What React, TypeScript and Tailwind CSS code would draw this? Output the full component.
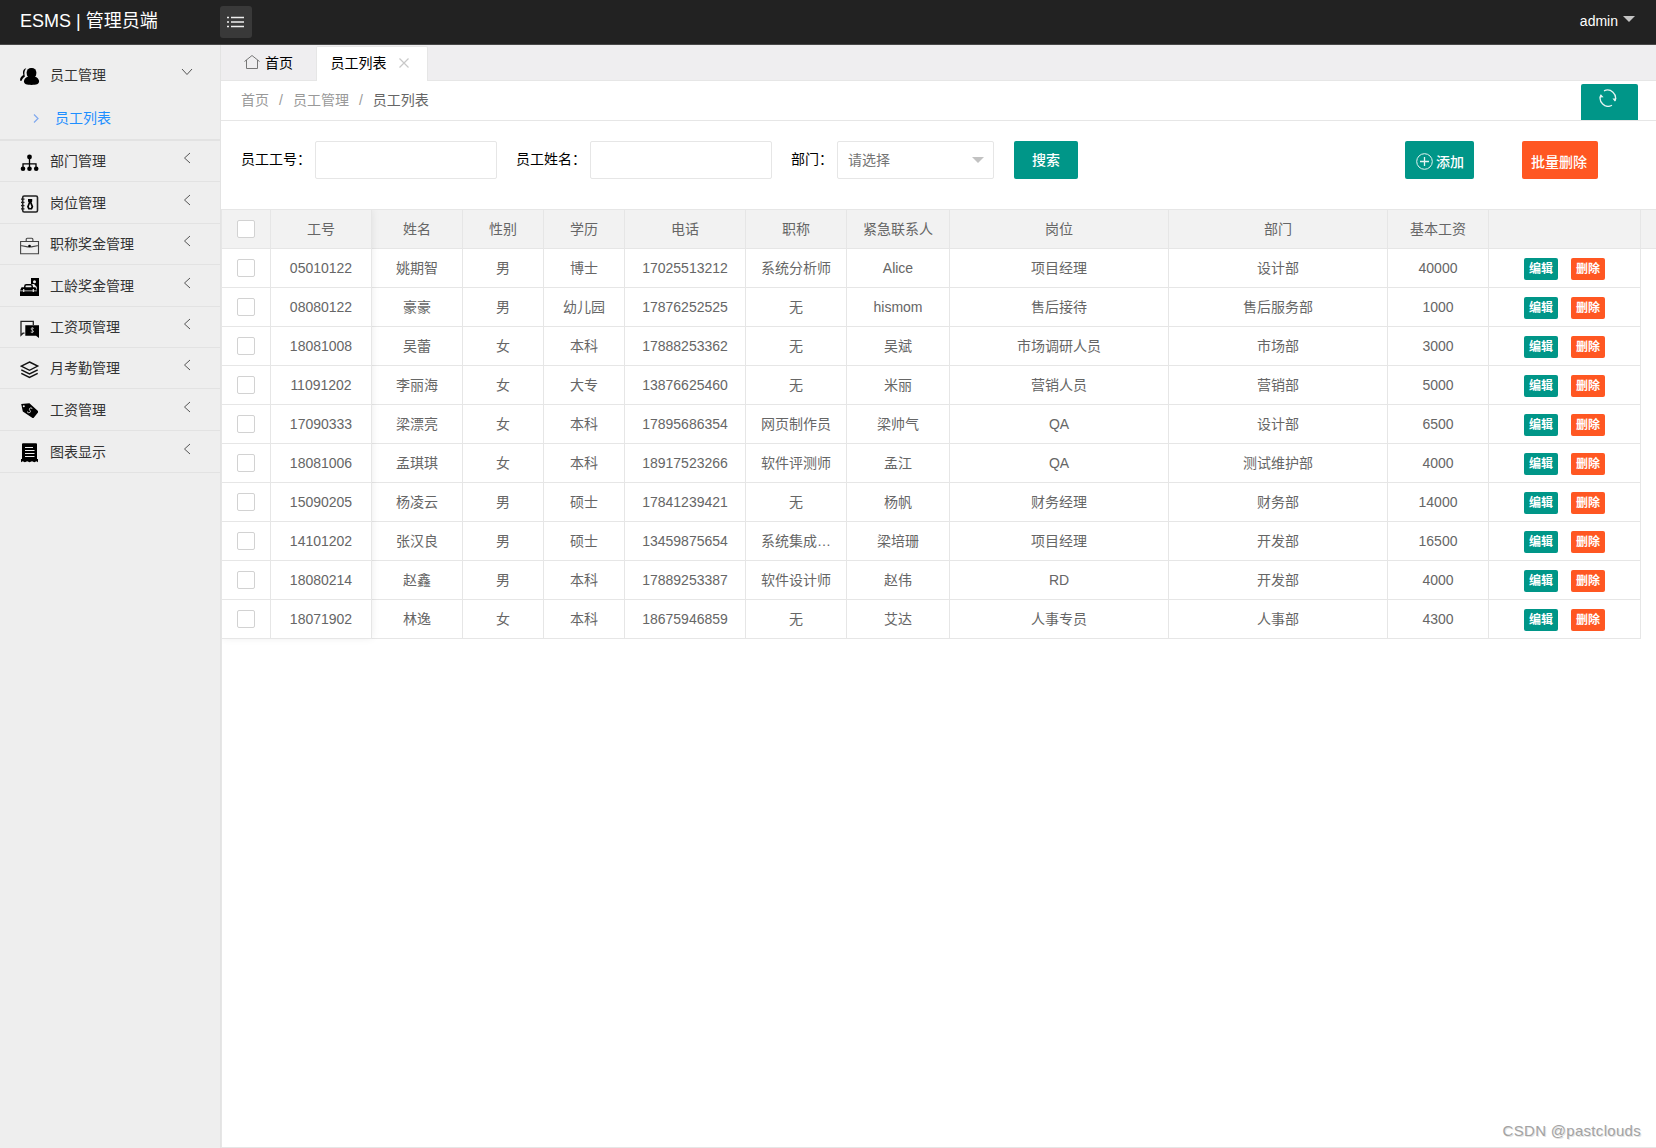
import type { ReactNode } from "react";

const employees = [
    ['05010122', '姚期智', '男', '博士', '17025513212', '系统分析师', 'Alice', '项目经理', '设计部', '40000'],
    ['08080122', '豪豪', '男', '幼儿园', '17876252525', '无', 'hismom', '售后接待', '售后服务部', '1000'],
    ['18081008', '吴蕾', '女', '本科', '17888253362', '无', '吴斌', '市场调研人员', '市场部', '3000'],
    ['11091202', '李丽海', '女', '大专', '13876625460', '无', '米丽', '营销人员', '营销部', '5000'],
    ['17090333', '梁漂亮', '女', '本科', '17895686354', '网页制作员', '梁帅气', 'QA', '设计部', '6500'],
    ['18081006', '孟琪琪', '女', '本科', '18917523266', '软件评测师', '孟江', 'QA', '测试维护部', '4000'],
    ['15090205', '杨凌云', '男', '硕士', '17841239421', '无', '杨帆', '财务经理', '财务部', '14000'],
    ['14101202', '张汉良', '男', '硕士', '13459875654', '系统集成…', '梁培珊', '项目经理', '开发部', '16500'],
    ['18080214', '赵鑫', '男', '本科', '17889253387', '软件设计师', '赵伟', 'RD', '开发部', '4000'],
    ['18071902', '林逸', '女', '本科', '18675946859', '无', '艾达', '人事专员', '人事部', '4300'],
];

const headings = ['工号', '姓名', '性别', '学历', '电话', '职称', '紧急联系人', '岗位', '部门', '基本工资'];

const columns = 'grid grid-cols-[49px_101px_91px_81px_81px_121px_101px_103px_219px_219px_101px_152px]';

const Icon = ({ children }: { children: ReactNode }) => (
    <svg viewBox="0 0 20 20" className="w-5 h-5 shrink-0 fill-black">
        {children}
    </svg>
);

const menu = [
    {
        label: '部门管理',
        height: 'h-[41px]',
        icon: (
            <Icon>
                <circle cx="9.5" cy="4" r="2.4" />
                <path d="M9.5 5v10M3 15v-4.2h13V15" fill="none" stroke="#000" strokeWidth="1.3" />
                <circle cx="3" cy="15.8" r="2.3" />
                <circle cx="9.5" cy="15.8" r="2.3" />
                <circle cx="16.2" cy="15.8" r="2.3" />
            </Icon>
        ),
    },
    {
        label: '岗位管理',
        height: 'h-[42px]',
        icon: (
            <Icon>
                <rect x="2.7" y="2" width="14.8" height="16" rx="1.5" fill="none" stroke="#222" strokeWidth="1.6" />
                <path d="M1 5.2h3.5M1 8.4h3.5M1 11.6h3.5M1 14.8h3.5" stroke="#222" strokeWidth="1.3" />
                <path fillRule="evenodd" d="M8 5h4.2v2.500l-.6.800 1.700 4.500-1.300 2.600H8.300L7 12.800l1.700-4.500-.7-.8zM10.100 9.200l-1.200 3.400.6 1.400h1.300l.6-1.400z" />
            </Icon>
        ),
    },
    {
        label: '职称奖金管理',
        height: 'h-[41px]',
        icon: (
            <Icon>
                <path d="M.6 5.5h17.9v12.3H.6zM.6 9.500l7 1.400h3.900l7-1.400M6.200 5V3.400Q6.200 2.300 7.300 2.300h4.500q1.100 0 1.100 1.100V5" fill="none" stroke="#444" strokeWidth="1.1" />
                <circle cx="9.5" cy="10" r="1.3" />
            </Icon>
        ),
    },
    {
        label: '工龄奖金管理',
        height: 'h-[42px]',
        icon: (
            <Icon>
                <path fillRule="evenodd" d="M11 1h8v18h-2.200V10L14 7h-3zM14.5 3.200a1.500 1.500 0 100 3 1.500 1.500 0 000-3z" />
                <path d="M4.800 11V9.500Q4.800 7.800 6.300 7.800h4.400q1.500 0 1.500 1.700V11" fill="none" stroke="#000" strokeWidth="1.5" />
                <path d="M1.500 10.300h14L17 13.400H0zM0 14.200h17V19H0z" />
                <path d="M3.700 12v3M13.300 12v3" stroke="#eee" strokeWidth="1.2" />
            </Icon>
        ),
    },
    {
        label: '工资项管理',
        height: 'h-[41px]',
        icon: (
            <Icon>
                <path d="M4.5 14.200H3l-2 2V2.400h12.300V6" fill="none" stroke="#222" strokeWidth="1.3" />
                <path d="M5.300 6.300H19V19l-3-2.300H5.300z" />
                <path d="M13.900 9.500q-1.500-.9-2.600-.2-.9 1 .8 1.800 2 .7 1.200 1.900-1.100.9-2.600 0M12.300 8.300v5.800" fill="none" stroke="#bbb" strokeWidth=".9" />
            </Icon>
        ),
    },
    {
        label: '月考勤管理',
        height: 'h-[41px]',
        icon: (
            <Icon>
                <path d="M9.5 2l8.200 4.100-8.200 4.200-8.200-4.200zM1.300 9.800l8.200 4.100 8.200-4.100M1.300 13.400l8.200 4.100 8.200-4.100" fill="none" stroke="#111" strokeWidth="1.4" />
            </Icon>
        ),
    },
    {
        label: '工资管理',
        height: 'h-[42px]',
        icon: (
            <Icon>
                <path fillRule="evenodd" d="M1.200 3l8.200-.7 8.600 7.700v1.500L13.500 17h-1L2.800 10.500zM3.800 4.200a1 1 0 100 2 1 1 0 000-2z" />
                <path d="M12.300 7.500q-1.700-1.300-2.700 0-.6 1.200.4 2 1 1.100-.2 2.100-1.500.6-2.800-.9" fill="none" stroke="#ddd" strokeWidth="1" />
            </Icon>
        ),
    },
    {
        label: '图表显示',
        height: 'h-[42px]',
        icon: (
            <Icon>
                <path d="M3 .3h13q1 0 1 1v14.700h1v3.300l-1.500-1.100-2.200 1.100-2.300-1.100-2.500 1.100-2.300-1.100-2.300 1.100-2.200-1.100-1.700 1.100V16h1V1.300q0-1 1-1z" />
                <path d="M5 4.500h8M5 7.500h9.500M5 10.500h9.500M5 13.500h9.500" stroke="#eee" strokeWidth="1.1" />
            </Icon>
        ),
    },
];

const Checkbox = () => (
    <span className="block w-[18px] h-[18px] rounded-[2px] border border-[#d2d2d2] bg-white" />
);

const Cell = ({ children }: { children?: ReactNode }) => (
    <div className="flex items-center justify-center border-r border-b border-[#e6e6e6] whitespace-nowrap">
        {children}
    </div>
);

const Field = ({ label, width }: { label: string; width: string }) => (
    <label className="flex items-start">
        <span className={`${width} leading-[36px] text-black whitespace-nowrap`}>{label}</span>
        <input type="text" className="w-[182px] h-[38px] border border-[#e6e6e6] rounded-[2px] bg-white outline-none" />
    </label>
);

const Header = () => (
    <header className="flex h-[45px] bg-[#222] border-b border-[#484848] text-white">
        <h1 className="w-[220px] pl-5 text-[18px] leading-[42px]">ESMS | 管理员端</h1>
        <button className="mt-[6px] flex w-8 h-8 items-center justify-center rounded-[3px] bg-[#393939]">
            <svg viewBox="0 0 18 12" className="w-[18px] h-3">
                <path d="M0 1.500h2M4 1.500h13M0 6h2M4 6h13M0 10.500h2M4 10.500h13" stroke="#eee" strokeWidth="1.3" />
            </svg>
        </button>
        <div className="ml-auto mr-[21px] flex leading-[42px]">
            <span>admin</span>
            <svg viewBox="0 0 12 6" className="ml-[5px] mt-4 w-3 h-[6px] fill-[#c4c4c4]">
                <path d="M0 0h12L6 6z" />
            </svg>
        </div>
    </header>
);

const Sidebar = () => (
    <nav className="w-[221px] shrink-0 border-r border-[#e3e3e3] bg-[#eee] text-[#333]">
        <div className="h-[96px] border-b-2 border-[#e2e2e2]">
            <div className="flex h-[60px] pl-5">
                <div className="mt-[21px]">
                    <Icon>
                        <path d="M6.300 2.200C3.200 2.800 2.300 6 3.400 9 1 10.500-.2 12 .1 14.800h1.600c.5-1.800 1.400-3 3.200-4.200C4 7.800 4.200 4.600 6.300 2.200z" />
                        <rect x="6.700" y="2" width="9.600" height="10" rx="4.300" />
                        <path d="M8.500 10.500h6c3 .9 4.600 2.900 4.600 5 0 2.500-2.900 3.400-7.600 3.400S3.900 18 3.900 15.500c0-2.100 1.600-4.100 4.600-5z" />
                    </Icon>
                </div>
                <span className="ml-[10px] leading-[60px]">员工管理</span>
                <svg viewBox="0 0 12 8" className="ml-auto mr-[27px] mt-[23px] w-3 h-2 fill-none stroke-[#555]">
                    <path d="M1 1l5 5.500L11 1" />
                </svg>
            </div>
            <div className="flex h-[26px] items-center pl-[33px] text-[#1e8fff]">
                <svg viewBox="0 0 6 9" className="w-[6px] h-[9px] fill-none stroke-[#7fa8ee]">
                    <path d="M1 .5l4 4-4 4" strokeWidth="1.2" />
                </svg>
                <span className="ml-4">员工列表</span>
            </div>
        </div>
        {menu.map(({ label, height, icon }) => (
            <div key={label} className={`flex items-center pl-5 border-b border-[#e2e2e2] ${height}`}>
                <div className="mt-[3px]">{icon}</div>
                <span className="ml-[10px]">{label}</span>
                <svg viewBox="0 0 8 12" className="ml-auto mr-[29px] mb-[6px] w-2 h-3 fill-none stroke-[#555]">
                    <path d="M7 1L1.500 6 7 11" />
                </svg>
            </div>
        ))}
    </nav>
);

const Tabs = () => (
    <div className="flex h-[36px] border-b border-[#e6e6e6] bg-[#efeef0] text-black">
        <div className="flex w-[95px] items-center pl-[23px]">
            <svg viewBox="0 0 16 16" className="mb-px w-4 h-4 fill-none stroke-[#777]">
                <path d="M.5 7.500L8 1.500l7.500 6M2.500 6v8.500h11V6" />
            </svg>
            <span className="ml-[5px]">首页</span>
        </div>
        <div className="mt-px -mb-px flex w-[112px] h-[35px] items-center rounded-t-[2px] border border-b-0 border-[#e6e6e6] bg-white pl-[13.5px] pb-[3px]">
            <span>员工列表</span>
            <svg viewBox="0 0 10 10" className="ml-3 mt-px w-[10px] h-[10px] stroke-[#c8c8c8]">
                <path d="M.5 .5l9 9M9.500 .5l-9 9" strokeWidth="1.2" />
            </svg>
        </div>
    </div>
);

const Breadcrumb = () => (
    <div className="flex h-[40px] border-b border-[#e6e6e6] pl-5 pr-[18px] leading-[38px] text-[#999]">
        <span>首页</span>
        <span className="mx-[10px]">/</span>
        <span>员工管理</span>
        <span className="mx-[10px]">/</span>
        <span className="text-[#666]">员工列表</span>
        <button className="ml-auto mt-[3px] flex w-[57px] h-[36px] justify-center rounded-t-[2px] bg-[#009688] pr-[3px] pt-[5px]">
            <svg viewBox="0 0 18 18" className="w-[18px] h-[18px] fill-none stroke-[#e6f4f3]">
                <path d="M5 1.800A8 8 0 0115.900 12M13 16.300A8 8 0 012 5.800" strokeWidth="1.3" />
                <path d="M13.500 9.500l2.300 3L17.600 9.500zM.4 8.500L2 5.500l2.600 2.800z" fill="#e6f4f3" stroke="none" />
            </svg>
        </button>
    </div>
);

const SearchBar = () => (
    <div className="flex h-[88px] items-start pt-5 pl-5 pr-[58px]">
        <Field label="员工工号：" width="w-[74px]" />
        <div className="ml-[19px]">
            <Field label="员工姓名：" width="w-[74px]" />
        </div>
        <span className="ml-[19px] w-[46px] whitespace-nowrap leading-[36px] text-black">部门：</span>
        <div className="flex w-[157px] h-[38px] items-center justify-between rounded-[2px] border border-[#e6e6e6] pl-[10px] pr-[9px] text-[#757575]">
            <span>请选择</span>
            <svg viewBox="0 0 12 6" className="w-3 h-[6px] fill-[#c2c2c2]">
                <path d="M0 0h12L6 6z" />
            </svg>
        </div>
        <button className="ml-5 w-[64px] h-[38px] rounded-[2px] bg-[#009688] font-medium text-white">搜索</button>
        <button className="ml-auto flex w-[69px] h-[38px] items-center rounded-[2px] bg-[#009688] pl-[11px] pt-[3px] font-medium text-white">
            <svg viewBox="0 0 17 17" className="w-[17px] h-[17px] fill-none stroke-[#e6f4f3]">
                <circle cx="8.5" cy="8.5" r="7.8" />
                <path d="M8.500 4v9M4 8.500h9" strokeWidth="1.3" />
            </svg>
            <span className="ml-[3px]">添加</span>
        </button>
        <button className="ml-12 w-[76px] h-[38px] rounded-[2px] bg-[#ff5722] pt-[3px] pr-[2px] font-medium text-white">批量删除</button>
    </div>
);

const EmployeeTable = () => (
    <div className="relative border-t border-[#e6e6e6] text-[#666]">
        <div className="flex h-[39px] bg-[#f2f2f2]">
            <div className={columns}>
                <Cell><Checkbox /></Cell>
                {headings.map((heading) => (
                    <Cell key={heading}>{heading}</Cell>
                ))}
                <Cell />
            </div>
            <div className="flex-1 border-b border-[#e6e6e6]" />
        </div>
        {employees.map((employee) => (
            <div key={employee[0]} className={`h-[39px] ${columns}`}>
                <Cell><Checkbox /></Cell>
                {employee.map((value, index) => (
                    <Cell key={index}>{value}</Cell>
                ))}
                <Cell>
                    <div className="flex gap-[13px] pt-[2px] text-[12px] font-bold leading-[22px] text-white">
                        <button className="w-[34px] h-[22px] rounded-[2px] bg-[#009688]">编辑</button>
                        <button className="w-[34px] h-[22px] rounded-[2px] bg-[#ff5722]">删除</button>
                    </div>
                </Cell>
            </div>
        ))}
        <div className="pointer-events-none absolute left-0 top-0 h-[429px] w-[150px] shadow-[0_-1px_8px_rgba(0,0,0,0.08)] [clip-path:inset(0_-12px_-12px_0)]" />
    </div>
);

export default function App() {
    return (
        <div className="relative flex w-[1656px] h-[1148px] flex-col overflow-hidden bg-white font-['Liberation_Sans','Noto_Sans_CJK_SC',sans-serif] text-[14px] leading-5">
            <Header />
            <div className="flex flex-1">
                <Sidebar />
                <main className="flex min-w-0 flex-1 flex-col">
                    <Tabs />
                    <Breadcrumb />
                    <SearchBar />
                    <div className="flex-1 border-b border-l border-[#e6e6e6]">
                        <EmployeeTable />
                    </div>
                </main>
            </div>
            <div className="absolute right-[15px] bottom-[7px] text-[15px] tracking-[0.3px] text-[#a3a3a3] [text-shadow:1px_1px_0_#e3e3e3]">CSDN @pastclouds</div>
        </div>
    );
}
